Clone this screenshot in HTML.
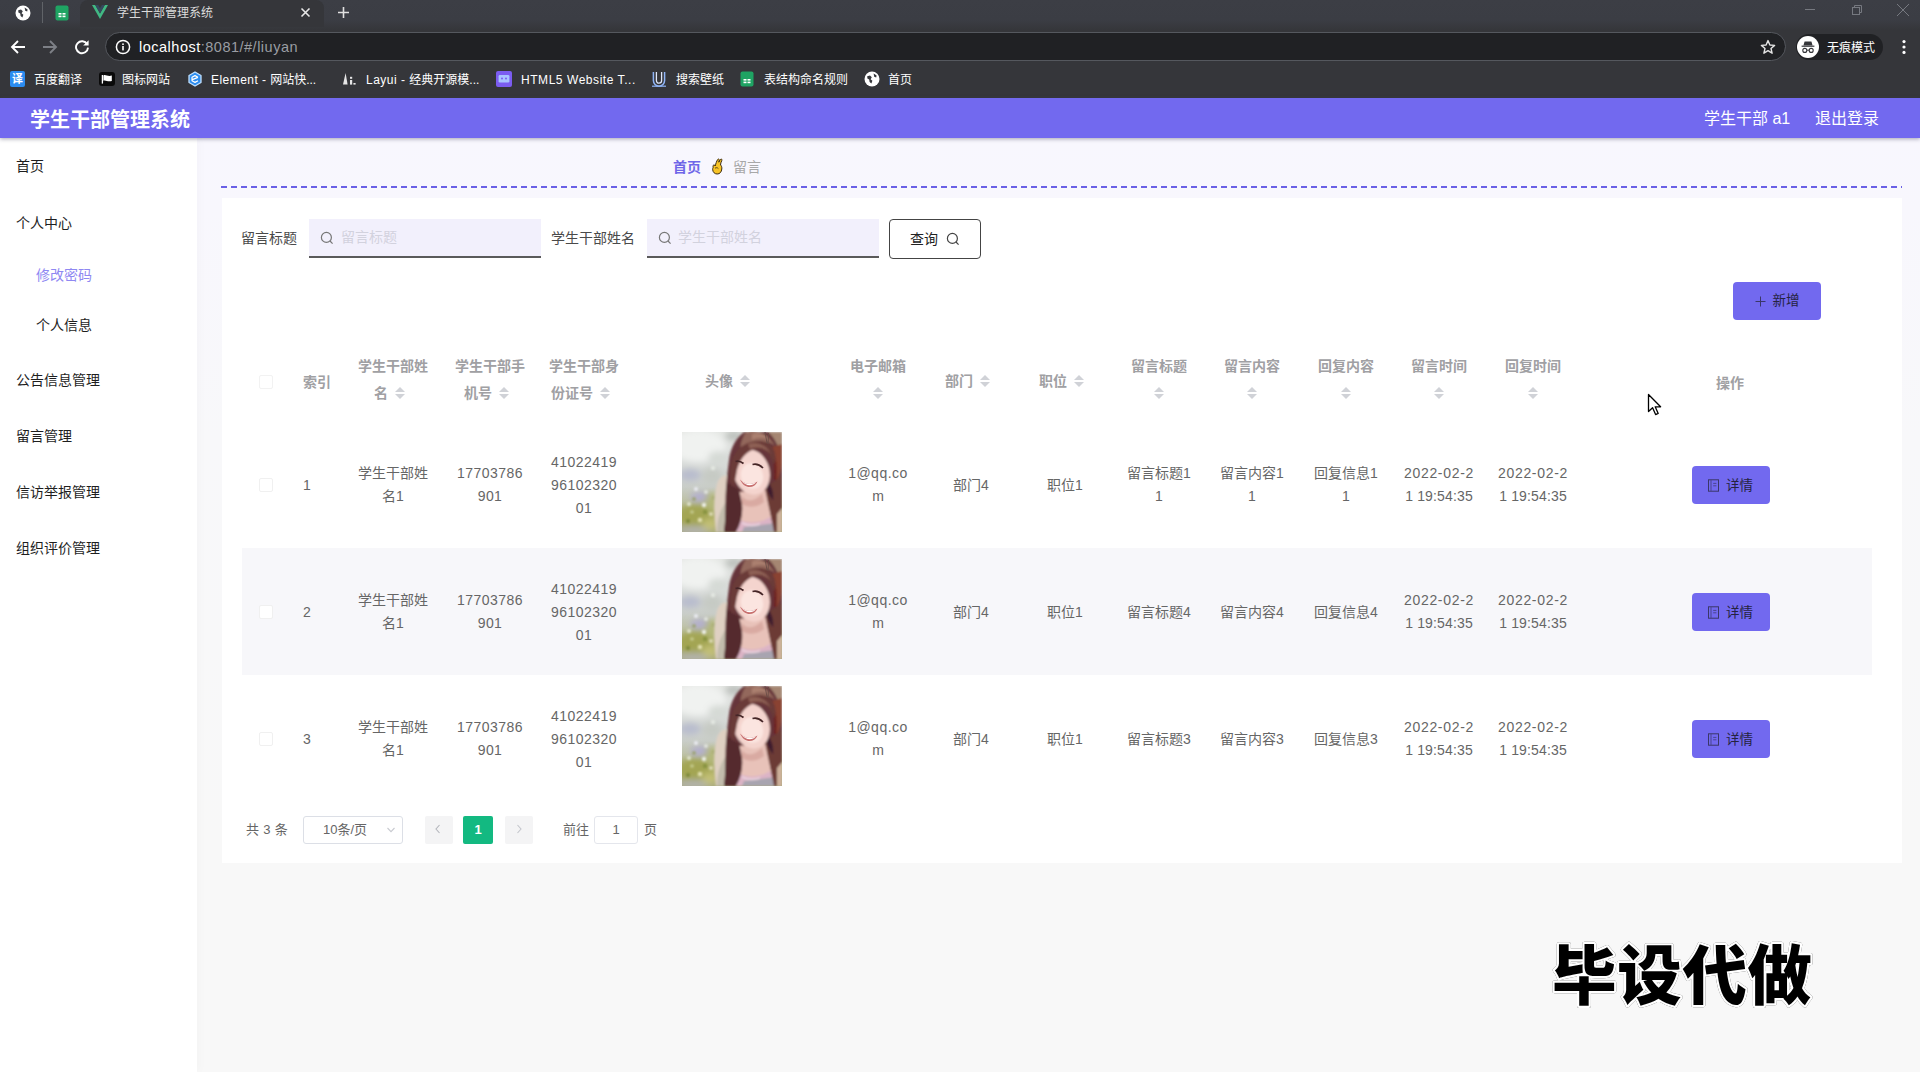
<!DOCTYPE html>
<html lang="zh-CN"><head><meta charset="utf-8"><title>学生干部管理系统</title>
<style>
*{box-sizing:border-box;margin:0;padding:0}
html,body{width:1920px;height:1072px;overflow:hidden;background:#f8f8f8;font-family:"Liberation Sans", "Noto Sans CJK SC", sans-serif;}
body{position:relative}
.abs{position:absolute}
.t{position:absolute;white-space:nowrap;line-height:1}
/* chrome */
#tabstrip{left:0;top:0;width:1920px;height:30px;background:linear-gradient(180deg,#3c3e45 0,#3b3d44 20px,#35363a 30px)}
#toolbar{left:0;top:30px;width:1920px;height:68px;background:#35363a}
#activetab{left:80px;top:0;width:244px;height:27px;background:#35363a;border-radius:8px 8px 0 0}
#omni{left:105px;top:32px;width:1681px;height:29px;border-radius:15px;background:#202124;border:1px solid #55585e}
#incog{left:1796px;top:34px;width:87px;height:26px;border-radius:13px;background:#202124}
.bm{font-size:12px;color:#fff;top:73px}
/* app */
#hdr{left:0;top:98px;width:1920px;height:40px;background:#7269ef;box-shadow:0 1px 4px rgba(60,60,90,.45)}
#side{left:0;top:138px;width:197px;height:934px;background:#fff;box-shadow:2px 0 10px rgba(0,0,0,.025)}
#mainbg{left:197px;top:138px;width:1723px;height:934px;background:linear-gradient(180deg,#f8f7fe 0,#f8f7fd 70px,#f8f8fa 300px,#f8f8f8 700px)}
#card{left:222px;top:198px;width:1680px;height:665px;background:#fff}
.menu{font-size:14px;color:#222}
.th{position:absolute;text-align:center;font-size:14px;font-weight:bold;color:#a0a0a3;line-height:27px;white-space:nowrap}
.td{position:absolute;text-align:center;font-size:14px;color:#666;line-height:23px;white-space:nowrap}
.btn{position:absolute;background:#7269ef;border-radius:4px;color:#3a3a5a;font-size:12px}
.caret{display:inline-block;width:24px;height:12px;vertical-align:middle;position:relative;top:-1px}
.caret:before{content:"";position:absolute;left:7px;top:0;border:5px solid transparent;border-bottom-color:#d0d2d7;border-top-width:0}
.caret:after{content:"";position:absolute;left:7px;top:7px;border:5px solid transparent;border-top-color:#d0d2d7;border-bottom-width:0}
.num{letter-spacing:.45px}
</style></head>
<body>
<div class="abs" id="tabstrip"></div>
<div class="abs" id="toolbar"></div>
<div class="abs" id="activetab"></div>
<svg class="abs" style="left:15px;top:4.5px" width="16" height="16" viewBox="0 0 16 16"><circle cx="8" cy="8" r="7.5" fill="#fff"/><path d="M3.2 5.2 L6 4.6 L7.8 6.2 L6.6 8.2 L8.4 9.8 L7.4 12.6 L5.6 11 L5.2 8.6 L3.4 7.4 Z M9.6 2.6 L12.6 4.4 L12.2 6.6 L10.2 5.8 Z" fill="#3b3d43"/></svg>
<div class="abs" style="left:42px;top:2px;width:1px;height:21px;background:#606368"></div>
<svg class="abs" style="left:55px;top:5px" width="14" height="16" viewBox="0 0 14 16"><rect x="0.5" y="0.5" width="13" height="15" rx="2" fill="#1fa463"/><rect x="3.5" y="8" width="3" height="1.6" fill="#fff"/><rect x="7.5" y="8" width="3" height="1.6" fill="#fff"/><rect x="3.5" y="10.6" width="3" height="1.6" fill="#fff"/><rect x="7.5" y="10.6" width="3" height="1.6" fill="#fff"/></svg>
<svg class="abs" style="left:92px;top:5px" width="16" height="14" viewBox="0 0 16 14"><path d="M0 0 L8 14 L16 0 L12.8 0 L8 8.4 L3.2 0 Z" fill="#41b883"/><path d="M3.2 0 L8 8.4 L12.8 0 L9.9 0 L8 3.3 L6.1 0 Z" fill="#35495e"/></svg>
<div class="t" style="left:117px;top:6.5px;font-size:12px;color:#dcdcdc;">学生干部管理系统</div>
<svg class="abs" style="left:300px;top:7px" width="11" height="11" viewBox="0 0 11 11"><path d="M1.5 1.5 L9.5 9.5 M9.5 1.5 L1.5 9.5" stroke="#e8e8e8" stroke-width="1.6" fill="none"/></svg>
<svg class="abs" style="left:337px;top:6px" width="13" height="13" viewBox="0 0 13 13"><path d="M6.5 1 V12 M1 6.5 H12" stroke="#e0e0e0" stroke-width="1.6" fill="none"/></svg>
<svg class="abs" style="left:1804px;top:3px" width="110" height="14" viewBox="0 0 110 14"><path d="M1 6.5 H11" stroke="#767980" stroke-width="1"/><rect x="48.5" y="4.5" width="7" height="7" fill="none" stroke="#767980"/><path d="M50.5 4.5 V2.5 H57.5 V9.5 H55.5" fill="none" stroke="#767980"/><path d="M93 1 L105 13 M105 1 L93 13" stroke="#767980" stroke-width="1"/></svg>
<svg class="abs" style="left:10px;top:39px" width="16" height="16" viewBox="0 0 16 16"><path d="M15 8 H2.5 M8 2 L2 8 L8 14" stroke="#fff" stroke-width="1.9" fill="none"/></svg>
<svg class="abs" style="left:42px;top:39px" width="16" height="16" viewBox="0 0 16 16"><path d="M1 8 H13.5 M8 2 L14 8 L8 14" stroke="#7d8086" stroke-width="1.9" fill="none"/></svg>
<svg class="abs" style="left:74px;top:39px" width="16" height="16" viewBox="0 0 16 16"><path d="M13.2 5.2 A6 6 0 1 0 14 8.6" stroke="#fff" stroke-width="1.9" fill="none"/><path d="M14.6 1.2 V6.6 H9.2 Z" fill="#fff"/></svg>
<div class="abs" id="omni"></div>
<svg class="abs" style="left:114.5px;top:39px" width="16" height="16" viewBox="0 0 16 16"><circle cx="8" cy="8" r="6.6" fill="none" stroke="#fff" stroke-width="1.5"/><rect x="7.2" y="7" width="1.6" height="4.4" fill="#fff"/><rect x="7.2" y="4.4" width="1.6" height="1.6" fill="#fff"/></svg>
<div class="t" style="left:139px;top:39px;font-size:14.5px;letter-spacing:.5px;color:#fff;line-height:16px">localhost<span style="color:#9a9da3">:8081/#/liuyan</span></div>
<svg class="abs" style="left:1760px;top:39px" width="16" height="16" viewBox="0 0 16 16"><path d="M8 1.6 L9.9 6 L14.6 6.4 L11 9.5 L12.1 14.2 L8 11.7 L3.9 14.2 L5 9.5 L1.4 6.4 L6.1 6 Z" fill="none" stroke="#e4e4e4" stroke-width="1.4" stroke-linejoin="round"/></svg>
<div class="abs" id="incog"></div>
<svg class="abs" style="left:1797px;top:36px" width="22" height="22" viewBox="0 0 22 22"><circle cx="11" cy="11" r="11" fill="#fff"/><path d="M7.6 5.4 h6.8 l1.2 4 h-9.2 Z" fill="#35363a"/><rect x="4.6" y="9.6" width="12.8" height="1.2" fill="#35363a"/><circle cx="7.8" cy="14.4" r="2" fill="none" stroke="#35363a" stroke-width="1.1"/><circle cx="14.2" cy="14.4" r="2" fill="none" stroke="#35363a" stroke-width="1.1"/><path d="M9.8 14.2 h2.4" stroke="#35363a" stroke-width="1"/></svg>
<div class="t" style="left:1827px;top:41.5px;font-size:12px;color:#fff;">无痕模式</div>
<svg class="abs" style="left:1901px;top:39px" width="6" height="16" viewBox="0 0 6 16"><circle cx="3" cy="2.6" r="1.6" fill="#fff"/><circle cx="3" cy="8" r="1.6" fill="#fff"/><circle cx="3" cy="13.4" r="1.6" fill="#fff"/></svg>
<div class="abs" style="left:10px;top:71px;width:15px;height:16px;background:#2b8cf0;border-radius:2px"></div>
<div class="t" style="left:12px;top:74.0px;font-size:11px;color:#fff;font-weight:bold">译</div>
<div class="t" style="left:34px;top:73.5px;font-size:12px;color:#fff;">百度翻译</div>
<svg class="abs" style="left:99px;top:71px" width="16" height="16" viewBox="0 0 16 16"><rect x="0" y="1" width="16" height="14" rx="3" fill="#0a0a0a"/><path d="M3.4 4 V12.6" stroke="#fff" stroke-width="1.3"/><path d="M4.4 4.4 C6.6 3.2 8.6 5.8 12.8 4.6 V10 C8.6 11.2 6.6 8.6 4.4 9.8 Z" fill="#fff"/></svg>
<div class="t" style="left:122px;top:73.5px;font-size:12px;color:#fff;">图标网站</div>
<svg class="abs" style="left:187px;top:71px" width="16" height="16" viewBox="0 0 16 16"><path d="M8 1 L14 4.5 V11.5 L8 15 L2 11.5 V4.5 Z" fill="#2c8df0" stroke="#bfe0ff" stroke-width="1.3" stroke-linejoin="round"/><path d="M11 6.2 L8 4.6 L5 6.2 V9.8 L8 11.4 L11 9.8 M5.4 8.6 L11 6.4" stroke="#fff" stroke-width="1.2" fill="none" stroke-linejoin="round"/></svg>
<div class="t" style="left:211px;top:73.5px;font-size:12px;color:#fff;"><span style="letter-spacing:.45px">Element - </span>网站快...</div>
<svg class="abs" style="left:342px;top:72px" width="15" height="14" viewBox="0 0 15 14"><path d="M3.6 1 L5.6 12.6 H1 Z" fill="#e6e6e6"/><rect x="8" y="8" width="2.2" height="4.6" fill="#e6e6e6"/><rect x="8" y="4.8" width="2.2" height="2" fill="#e6e6e6"/><rect x="11.4" y="11" width="2.2" height="1.6" fill="#e6e6e6"/></svg>
<div class="t" style="left:366px;top:73.5px;font-size:12px;color:#fff;"><span style="letter-spacing:.5px">Layui - </span>经典开源模...</div>
<svg class="abs" style="left:496px;top:71px" width="16" height="16" viewBox="0 0 16 16"><rect width="16" height="16" rx="2" fill="#7b5cf0"/><rect x="2.6" y="4" width="10.8" height="7.4" rx="1.2" fill="#a9c4ff"/><circle cx="6" cy="7.4" r="1" fill="#7b5cf0"/><circle cx="10" cy="7.4" r="1" fill="#7b5cf0"/></svg>
<div class="t" style="left:521px;top:73.5px;font-size:12px;color:#fff;"><span style="letter-spacing:.55px">HTML5 Website T...</span></div>
<svg class="abs" style="left:651px;top:71px" width="16" height="16" viewBox="0 0 16 16"><path d="M2.4 1 V9.6 A5.6 5.6 0 0 0 13.6 9.6 V1" fill="none" stroke="#8fb4f6" stroke-width="1.5"/><path d="M5.4 1 V9.6 A2.6 2.6 0 0 0 10.6 9.6 V1" fill="none" stroke="#dfe8fb" stroke-width="1.3"/><path d="M1 15.2 H15" stroke="#8fb4f6" stroke-width="1.2"/></svg>
<div class="t" style="left:676px;top:73.5px;font-size:12px;color:#fff;">搜索壁纸</div>
<svg class="abs" style="left:740px;top:71px" width="14" height="16" viewBox="0 0 14 16"><rect x="0.5" y="0.5" width="13" height="15" rx="2" fill="#1fa463"/><rect x="3.5" y="8" width="3" height="1.6" fill="#fff"/><rect x="7.5" y="8" width="3" height="1.6" fill="#fff"/><rect x="3.5" y="10.6" width="3" height="1.6" fill="#fff"/><rect x="7.5" y="10.6" width="3" height="1.6" fill="#fff"/></svg>
<div class="t" style="left:764px;top:73.5px;font-size:12px;color:#fff;">表结构命名规则</div>
<svg class="abs" style="left:864px;top:71px" width="16" height="16" viewBox="0 0 16 16"><circle cx="8" cy="8" r="7.5" fill="#fff"/><path d="M3.2 5.2 L6 4.6 L7.8 6.2 L6.6 8.2 L8.4 9.8 L7.4 12.6 L5.6 11 L5.2 8.6 L3.4 7.4 Z M9.6 2.6 L12.6 4.4 L12.2 6.6 L10.2 5.8 Z" fill="#35363a"/></svg>
<div class="t" style="left:888px;top:73.5px;font-size:12px;color:#fff;">首页</div>
<div class="abs" id="mainbg"></div>
<div class="abs" id="side"></div>
<div class="abs" id="hdr"></div>
<div class="t" style="left:30px;top:109.5px;font-size:20px;color:#fff;font-weight:bold">学生干部管理系统</div>
<div class="t" style="left:1704px;top:111.0px;font-size:16px;color:#fff;">学生干部 a1</div>
<div class="t" style="left:1815px;top:111.0px;font-size:16px;color:#fff;">退出登录</div>
<div class="t" style="left:16px;top:158.7px;font-size:14px;color:#1e1e1e;">首页</div>
<div class="t" style="left:16px;top:215.7px;font-size:14px;color:#1e1e1e;">个人中心</div>
<div class="t" style="left:36px;top:268.0px;font-size:14px;color:#8f88f2;">修改密码</div>
<div class="t" style="left:36px;top:318.0px;font-size:14px;color:#1e1e1e;">个人信息</div>
<div class="t" style="left:16px;top:373.0px;font-size:14px;color:#1e1e1e;">公告信息管理</div>
<div class="t" style="left:16px;top:428.5px;font-size:14px;color:#1e1e1e;">留言管理</div>
<div class="t" style="left:16px;top:484.7px;font-size:14px;color:#1e1e1e;">信访举报管理</div>
<div class="t" style="left:16px;top:541.0px;font-size:14px;color:#1e1e1e;">组织评价管理</div>
<div class="t" style="left:673px;top:159.5px;font-size:14px;color:#6f66e8;font-weight:bold">首页</div>
<svg class="abs" style="left:710px;top:158px" width="14" height="17" viewBox="0 0 14 17"><path d="M3.2 9.2 C2.6 7.6 3.4 6.6 4.6 7 L5.2 8 C5.8 5.6 6.6 3.2 7.6 1.6 C8.3 0.6 9.6 1.1 9.3 2.3 L8.8 4.2 C9.3 3 10 1.9 10.7 1.3 C11.5 0.7 12.3 1.5 11.8 2.5 C11 4.2 10.6 5.6 10.5 7 C11.6 7.8 12 9.4 11.8 11 C11.5 14 9.8 16 7.2 16 C4.6 16 3 14.2 2.7 11.8 C2.6 10.8 2.8 9.8 3.2 9.2 Z" fill="#f7c325" stroke="#3a2a10" stroke-width="1" stroke-linejoin="round"/><path d="M5 10.2 C6.2 9.4 7.6 9.6 8.4 10.6" stroke="#3a2a10" stroke-width=".8" fill="none"/></svg>
<div class="t" style="left:733px;top:159.5px;font-size:14px;color:#a8a8a8;">留言</div>
<div class="abs" style="left:221px;top:186px;width:1681px;height:2px;background:repeating-linear-gradient(90deg,#6a60e6 0,#6a60e6 6px,transparent 6px,transparent 10px)"></div>
<div class="abs" id="card"></div>
<div class="t" style="left:241px;top:230.5px;font-size:14px;color:#4a4a4a;">留言标题</div>
<div class="abs" style="left:309px;top:219px;width:232px;height:39px;background:#f2f0fc;border-bottom:2px solid #5a5a5a"></div>
<svg class="abs" style="left:320px;top:231px" width="14" height="14" viewBox="0 0 14 14"><circle cx="6.4" cy="6.4" r="5" fill="none" stroke="#777" stroke-width="1.2"/><path d="M10 10 L12.6 12.6" stroke="#777" stroke-width="1.2"/></svg>
<div class="t" style="left:341px;top:230.0px;font-size:14px;color:#d2d2de;">留言标题</div>
<div class="t" style="left:551px;top:230.5px;font-size:14px;color:#4a4a4a;">学生干部姓名</div>
<div class="abs" style="left:647px;top:219px;width:232px;height:39px;background:#f2f0fc;border-bottom:2px solid #5a5a5a"></div>
<svg class="abs" style="left:658px;top:231px" width="14" height="14" viewBox="0 0 14 14"><circle cx="6.4" cy="6.4" r="5" fill="none" stroke="#777" stroke-width="1.2"/><path d="M10 10 L12.6 12.6" stroke="#777" stroke-width="1.2"/></svg>
<div class="t" style="left:678px;top:230.0px;font-size:14px;color:#d2d2de;">学生干部姓名</div>
<div class="abs" style="left:889px;top:218.5px;width:92px;height:40px;border:1px solid #444;border-radius:4px;background:#fff"></div>
<div class="t" style="left:910px;top:232.0px;font-size:14px;color:#222;">查询</div>
<svg class="abs" style="left:946px;top:232px" width="14" height="14" viewBox="0 0 14 14"><circle cx="6.4" cy="6.4" r="5" fill="none" stroke="#444" stroke-width="1.2"/><path d="M10 10 L12.6 12.6" stroke="#444" stroke-width="1.2"/></svg>
<div class="btn" style="left:1733px;top:282px;width:88px;height:38px"></div>
<svg class="abs" style="left:1755px;top:295.5px" width="11" height="11" viewBox="0 0 11 11"><path d="M5.5 0.5 V10.5 M0.5 5.5 H10.5" stroke="#3a3768" stroke-width="1" fill="none"/></svg>
<div class="t" style="left:1772.5px;top:294.25px;font-size:13.5px;color:#25233f;">新增</div>
<div class="t" style="left:303px;top:375.0px;font-size:14px;color:#a0a0a3;font-weight:bold">索引</div>
<div class="th" style="left:333px;top:352.5px;width:120px">学生干部姓</div>
<div class="th" style="left:333px;top:379.5px;width:120px">名<i class="caret"></i></div>
<div class="th" style="left:430px;top:352.5px;width:120px">学生干部手</div>
<div class="th" style="left:430px;top:379.5px;width:120px">机号<i class="caret"></i></div>
<div class="th" style="left:524px;top:352.5px;width:120px">学生干部身</div>
<div class="th" style="left:524px;top:379.5px;width:120px">份证号<i class="caret"></i></div>
<div class="th" style="left:671px;top:367.5px;width:120px">头像<i class="caret"></i></div>
<div class="th" style="left:818px;top:352.5px;width:120px">电子邮箱</div>
<div class="th" style="left:818px;top:379.5px;width:120px"><i class="caret"></i></div>
<div class="th" style="left:911px;top:367.5px;width:120px">部门<i class="caret"></i></div>
<div class="th" style="left:1005px;top:367.5px;width:120px">职位<i class="caret"></i></div>
<div class="th" style="left:1099px;top:352.5px;width:120px">留言标题</div>
<div class="th" style="left:1099px;top:379.5px;width:120px"><i class="caret"></i></div>
<div class="th" style="left:1192px;top:352.5px;width:120px">留言内容</div>
<div class="th" style="left:1192px;top:379.5px;width:120px"><i class="caret"></i></div>
<div class="th" style="left:1286px;top:352.5px;width:120px">回复内容</div>
<div class="th" style="left:1286px;top:379.5px;width:120px"><i class="caret"></i></div>
<div class="th" style="left:1379px;top:352.5px;width:120px">留言时间</div>
<div class="th" style="left:1379px;top:379.5px;width:120px"><i class="caret"></i></div>
<div class="th" style="left:1473px;top:352.5px;width:120px">回复时间</div>
<div class="th" style="left:1473px;top:379.5px;width:120px"><i class="caret"></i></div>
<div class="th" style="left:1670px;top:369.5px;width:120px">操作</div>
<div class="abs" style="left:259px;top:375px;width:14px;height:14px;border:1px solid #f2f2f2;border-radius:2px;background:#fff"></div>
<div class="abs" style="left:242px;top:548px;width:1630px;height:127px;background:#f7f7fa"></div>
<div class="abs" style="left:259px;top:478px;width:14px;height:14px;border:1px solid #f0f0f0;border-radius:2px;background:#fff"></div>
<div class="t" style="left:303px;top:478.0px;font-size:14px;color:#666;">1</div>
<div class="td " style="left:333px;top:462.0px;width:120px">学生干部姓<br>名1</div>
<div class="td num" style="left:430px;top:462.0px;width:120px">17703786<br>901</div>
<div class="td num" style="left:524px;top:450.5px;width:120px">41022419<br>96102320<br>01</div>
<div class="abs avatar" style="left:682px;top:432px;width:100px;height:100px;overflow:hidden"><svg width="100" height="100" viewBox="0 0 100 100" preserveAspectRatio="none"><defs><filter id="f1_" x="-20%" y="-20%" width="140%" height="140%"><feGaussianBlur stdDeviation="0.9"/></filter><filter id="f1_2" x="-20%" y="-20%" width="140%" height="140%"><feGaussianBlur stdDeviation="3.2"/></filter><filter id="f1_3" x="-20%" y="-20%" width="140%" height="140%"><feGaussianBlur stdDeviation="0.5"/></filter><linearGradient id="g1" x1="0" y1="0" x2="0" y2="1"><stop offset="0" stop-color="#e4e6e3"/><stop offset="0.3" stop-color="#d9dcda"/><stop offset="0.55" stop-color="#c9cdc8"/><stop offset="0.8" stop-color="#b4b88a"/><stop offset="1" stop-color="#a9aa80"/></linearGradient></defs><rect width="100" height="100" fill="url(#g1)"/><g filter="url(#f1_2)"><ellipse cx="16" cy="14" rx="28" ry="16" fill="#f0f2f0"/><ellipse cx="52" cy="4" rx="9" ry="5" fill="#bcc0bc"/><ellipse cx="36" cy="26" rx="10" ry="7" fill="#d6dad6"/><ellipse cx="8" cy="43" rx="11" ry="6" fill="#b8bccd"/><ellipse cx="30" cy="44" rx="10" ry="8" fill="#c6cac4"/><ellipse cx="18" cy="65" rx="10" ry="4" fill="#b0aad4"/><ellipse cx="14" cy="84" rx="20" ry="12" fill="#a3a552"/><ellipse cx="30" cy="70" rx="7" ry="10" fill="#b4b87c"/><ellipse cx="12" cy="98" rx="16" ry="4" fill="#b4b4b0"/><ellipse cx="28" cy="92" rx="8" ry="6" fill="#c2bf74"/></g><g filter="url(#f1_)"><circle cx="14" cy="57" r="2" fill="#eceef4"/><circle cx="24" cy="60" r="1.8" fill="#e8ebe6"/><circle cx="22" cy="73" r="2.2" fill="#eef0ea"/><circle cx="7" cy="72" r="2" fill="#e2e5d2"/><circle cx="18" cy="88" r="2.3" fill="#e2e0b0"/><circle cx="29" cy="82" r="2" fill="#dedcb8"/><circle cx="31" cy="36" r="2.2" fill="#e4e8e2"/><circle cx="6" cy="89" r="2" fill="#7c883a"/><circle cx="23" cy="80" r="2.2" fill="#86923f"/><circle cx="12" cy="67" r="1.8" fill="#98a068"/><circle cx="32" cy="66" r="2" fill="#a6ac72"/><circle cx="10" cy="80" r="1.8" fill="#c8cc90"/><path d="M34 100 C32 84 31 66 35 52 C37 45 42 42 46 44 L50 60 L50 100 Z" fill="#dfd0c2"/><path d="M35 100 C35 88 38 78 44 70 L49 100 Z" fill="#c2bcac"/><path d="M62 0 C54 6 48.5 16 47 28 C45.5 40 44 52 43.5 64 C43 78 44 90 42 100 L100 100 L100 0 Z" fill="#66363a"/><path d="M63 1 C72 -3 86 0 93 14 C86 8 74 8 64 17 C58 22 56 14 63 1 Z" fill="#93675b"/><path d="M70 2 C76 0 84 2 88 8 C82 5 76 5 70 8 Z" fill="#ab8070"/><path d="M86 0 C93 6 98 16 100 30 L100 0 Z" fill="#a58672"/><path d="M87 16 C93 22 95 36 94 50 C98 44 100 36 100 28 L100 12 Z" fill="#8a4230"/><path d="M89 18 C93 26 94 38 93 48" stroke="#6e2424" stroke-width="3" fill="none"/><path d="M57 60 L84 58 L92 100 L53 100 Z" fill="#e8c2b9"/><path d="M60 64 C64 70 72 70 80 62 L82 70 C74 76 66 76 60 72 Z" fill="#d9aaa2"/><path d="M56 87 C64 92 78 92 88 85 L94 100 L52 100 Z" fill="#dcb4c6"/><path d="M62 95 L94 91 L95 100 L60 100 Z" fill="#a8a4b0"/><path d="M60 91 C66 94 72 94 78 92" stroke="#eed8e2" stroke-width="1.6" fill="none"/><path d="M83 56 C86 72 90 88 92 100 L100 100 L100 44 Z" fill="#6c3a36"/><path d="M84 47 C88 52 92 58 91 68 C87 64 84 58 84 47 Z" fill="#3c1f2e"/><path d="M95 82 L100 76 L100 100 L95 100 Z" fill="#cdb09a"/><path d="M45 50 C44 66 44 82 42 100 L54 100 C59 92 61 82 60 72 C59 66 58 62 57 58 Z" fill="#552a2f"/><ellipse cx="69.5" cy="40" rx="18" ry="23" transform="rotate(-16 69.5 40)" fill="#f4d4ce"/><ellipse cx="70" cy="44" rx="11" ry="13" transform="rotate(-16 70 44)" fill="#fbe5e0"/><path d="M49 34 C51 20 60 10 76 9 C92 9 96 22 92 34 C90 24 84 17 76 17 C66 17 58 26 55 38 C54 44 53 50 51 56 C48 50 48 42 49 34 Z" fill="#6b3a38"/><path d="M66 12 C74 9 84 12 89 22 C84 16 76 14 68 17 Z" fill="#8e6054"/></g><g filter="url(#f1_3)"><path d="M53.5 29.5 C56 28.5 59 29.5 61.5 31.5" stroke="#452628" stroke-width="1.7" fill="none"/><path d="M70.5 32.5 C74 31.5 78 33 81 36" stroke="#452628" stroke-width="1.7" fill="none"/><path d="M58 47.5 C63 52.5 69 53.5 75.5 49.5 C72 57.5 62 57 58 47.5 Z" fill="#c76f6e"/><path d="M59.5 49 C64 52.4 69 52.8 74 50.2 C71 54.4 63.5 54.2 59.5 49 Z" fill="#fff"/><path d="M83 0 L85 11 M86.5 1 L86 12" stroke="#6a4c46" stroke-width="0.9" fill="none"/></g></svg></div>
<div class="td " style="left:818px;top:462.0px;width:120px"><span style="letter-spacing:.5px">1@qq.co</span><br>m</div>
<div class="td " style="left:911px;top:473.5px;width:120px">部门4</div>
<div class="td " style="left:1005px;top:473.5px;width:120px">职位1</div>
<div class="td " style="left:1099px;top:462.0px;width:120px">留言标题1<br>1</div>
<div class="td " style="left:1192px;top:462.0px;width:120px">留言内容1<br>1</div>
<div class="td " style="left:1286px;top:462.0px;width:120px">回复信息1<br>1</div>
<div class="td " style="left:1379px;top:462.0px;width:120px"><span style="letter-spacing:.7px">2022-02-2</span><br><span style="letter-spacing:.15px">1 19:54:35</span></div>
<div class="td " style="left:1473px;top:462.0px;width:120px"><span style="letter-spacing:.7px">2022-02-2</span><br><span style="letter-spacing:.15px">1 19:54:35</span></div>
<div class="btn" style="left:1692px;top:466px;width:78px;height:38px"></div>
<svg class="abs" style="left:1707px;top:478.5px" width="13" height="13" viewBox="0 0 13 13"><rect x="1.5" y="0.8" width="10" height="11.4" fill="none" stroke="#3a3768" stroke-width="1"/><path d="M4 0.8 V12.2 M6.2 4.4 H9.4 M6.2 6.8 H9.4" stroke="#4a4690" stroke-width="1" fill="none"/></svg>
<div class="t" style="left:1726px;top:478.75px;font-size:13.5px;color:#25233f;">详情</div>
<div class="abs" style="left:259px;top:605px;width:14px;height:14px;border:1px solid #f0f0f0;border-radius:2px;background:#fff"></div>
<div class="t" style="left:303px;top:605.0px;font-size:14px;color:#666;">2</div>
<div class="td " style="left:333px;top:589.0px;width:120px">学生干部姓<br>名1</div>
<div class="td num" style="left:430px;top:589.0px;width:120px">17703786<br>901</div>
<div class="td num" style="left:524px;top:577.5px;width:120px">41022419<br>96102320<br>01</div>
<div class="abs avatar" style="left:682px;top:559px;width:100px;height:100px;overflow:hidden"><svg width="100" height="100" viewBox="0 0 100 100" preserveAspectRatio="none"><defs><filter id="f2_" x="-20%" y="-20%" width="140%" height="140%"><feGaussianBlur stdDeviation="0.9"/></filter><filter id="f2_2" x="-20%" y="-20%" width="140%" height="140%"><feGaussianBlur stdDeviation="3.2"/></filter><filter id="f2_3" x="-20%" y="-20%" width="140%" height="140%"><feGaussianBlur stdDeviation="0.5"/></filter><linearGradient id="g2" x1="0" y1="0" x2="0" y2="1"><stop offset="0" stop-color="#e4e6e3"/><stop offset="0.3" stop-color="#d9dcda"/><stop offset="0.55" stop-color="#c9cdc8"/><stop offset="0.8" stop-color="#b4b88a"/><stop offset="1" stop-color="#a9aa80"/></linearGradient></defs><rect width="100" height="100" fill="url(#g2)"/><g filter="url(#f2_2)"><ellipse cx="16" cy="14" rx="28" ry="16" fill="#f0f2f0"/><ellipse cx="52" cy="4" rx="9" ry="5" fill="#bcc0bc"/><ellipse cx="36" cy="26" rx="10" ry="7" fill="#d6dad6"/><ellipse cx="8" cy="43" rx="11" ry="6" fill="#b8bccd"/><ellipse cx="30" cy="44" rx="10" ry="8" fill="#c6cac4"/><ellipse cx="18" cy="65" rx="10" ry="4" fill="#b0aad4"/><ellipse cx="14" cy="84" rx="20" ry="12" fill="#a3a552"/><ellipse cx="30" cy="70" rx="7" ry="10" fill="#b4b87c"/><ellipse cx="12" cy="98" rx="16" ry="4" fill="#b4b4b0"/><ellipse cx="28" cy="92" rx="8" ry="6" fill="#c2bf74"/></g><g filter="url(#f2_)"><circle cx="14" cy="57" r="2" fill="#eceef4"/><circle cx="24" cy="60" r="1.8" fill="#e8ebe6"/><circle cx="22" cy="73" r="2.2" fill="#eef0ea"/><circle cx="7" cy="72" r="2" fill="#e2e5d2"/><circle cx="18" cy="88" r="2.3" fill="#e2e0b0"/><circle cx="29" cy="82" r="2" fill="#dedcb8"/><circle cx="31" cy="36" r="2.2" fill="#e4e8e2"/><circle cx="6" cy="89" r="2" fill="#7c883a"/><circle cx="23" cy="80" r="2.2" fill="#86923f"/><circle cx="12" cy="67" r="1.8" fill="#98a068"/><circle cx="32" cy="66" r="2" fill="#a6ac72"/><circle cx="10" cy="80" r="1.8" fill="#c8cc90"/><path d="M34 100 C32 84 31 66 35 52 C37 45 42 42 46 44 L50 60 L50 100 Z" fill="#dfd0c2"/><path d="M35 100 C35 88 38 78 44 70 L49 100 Z" fill="#c2bcac"/><path d="M62 0 C54 6 48.5 16 47 28 C45.5 40 44 52 43.5 64 C43 78 44 90 42 100 L100 100 L100 0 Z" fill="#66363a"/><path d="M63 1 C72 -3 86 0 93 14 C86 8 74 8 64 17 C58 22 56 14 63 1 Z" fill="#93675b"/><path d="M70 2 C76 0 84 2 88 8 C82 5 76 5 70 8 Z" fill="#ab8070"/><path d="M86 0 C93 6 98 16 100 30 L100 0 Z" fill="#a58672"/><path d="M87 16 C93 22 95 36 94 50 C98 44 100 36 100 28 L100 12 Z" fill="#8a4230"/><path d="M89 18 C93 26 94 38 93 48" stroke="#6e2424" stroke-width="3" fill="none"/><path d="M57 60 L84 58 L92 100 L53 100 Z" fill="#e8c2b9"/><path d="M60 64 C64 70 72 70 80 62 L82 70 C74 76 66 76 60 72 Z" fill="#d9aaa2"/><path d="M56 87 C64 92 78 92 88 85 L94 100 L52 100 Z" fill="#dcb4c6"/><path d="M62 95 L94 91 L95 100 L60 100 Z" fill="#a8a4b0"/><path d="M60 91 C66 94 72 94 78 92" stroke="#eed8e2" stroke-width="1.6" fill="none"/><path d="M83 56 C86 72 90 88 92 100 L100 100 L100 44 Z" fill="#6c3a36"/><path d="M84 47 C88 52 92 58 91 68 C87 64 84 58 84 47 Z" fill="#3c1f2e"/><path d="M95 82 L100 76 L100 100 L95 100 Z" fill="#cdb09a"/><path d="M45 50 C44 66 44 82 42 100 L54 100 C59 92 61 82 60 72 C59 66 58 62 57 58 Z" fill="#552a2f"/><ellipse cx="69.5" cy="40" rx="18" ry="23" transform="rotate(-16 69.5 40)" fill="#f4d4ce"/><ellipse cx="70" cy="44" rx="11" ry="13" transform="rotate(-16 70 44)" fill="#fbe5e0"/><path d="M49 34 C51 20 60 10 76 9 C92 9 96 22 92 34 C90 24 84 17 76 17 C66 17 58 26 55 38 C54 44 53 50 51 56 C48 50 48 42 49 34 Z" fill="#6b3a38"/><path d="M66 12 C74 9 84 12 89 22 C84 16 76 14 68 17 Z" fill="#8e6054"/></g><g filter="url(#f2_3)"><path d="M53.5 29.5 C56 28.5 59 29.5 61.5 31.5" stroke="#452628" stroke-width="1.7" fill="none"/><path d="M70.5 32.5 C74 31.5 78 33 81 36" stroke="#452628" stroke-width="1.7" fill="none"/><path d="M58 47.5 C63 52.5 69 53.5 75.5 49.5 C72 57.5 62 57 58 47.5 Z" fill="#c76f6e"/><path d="M59.5 49 C64 52.4 69 52.8 74 50.2 C71 54.4 63.5 54.2 59.5 49 Z" fill="#fff"/><path d="M83 0 L85 11 M86.5 1 L86 12" stroke="#6a4c46" stroke-width="0.9" fill="none"/></g></svg></div>
<div class="td " style="left:818px;top:589.0px;width:120px"><span style="letter-spacing:.5px">1@qq.co</span><br>m</div>
<div class="td " style="left:911px;top:600.5px;width:120px">部门4</div>
<div class="td " style="left:1005px;top:600.5px;width:120px">职位1</div>
<div class="td " style="left:1099px;top:600.5px;width:120px">留言标题4</div>
<div class="td " style="left:1192px;top:600.5px;width:120px">留言内容4</div>
<div class="td " style="left:1286px;top:600.5px;width:120px">回复信息4</div>
<div class="td " style="left:1379px;top:589.0px;width:120px"><span style="letter-spacing:.7px">2022-02-2</span><br><span style="letter-spacing:.15px">1 19:54:35</span></div>
<div class="td " style="left:1473px;top:589.0px;width:120px"><span style="letter-spacing:.7px">2022-02-2</span><br><span style="letter-spacing:.15px">1 19:54:35</span></div>
<div class="btn" style="left:1692px;top:593px;width:78px;height:38px"></div>
<svg class="abs" style="left:1707px;top:605.5px" width="13" height="13" viewBox="0 0 13 13"><rect x="1.5" y="0.8" width="10" height="11.4" fill="none" stroke="#3a3768" stroke-width="1"/><path d="M4 0.8 V12.2 M6.2 4.4 H9.4 M6.2 6.8 H9.4" stroke="#4a4690" stroke-width="1" fill="none"/></svg>
<div class="t" style="left:1726px;top:605.75px;font-size:13.5px;color:#25233f;">详情</div>
<div class="abs" style="left:259px;top:732px;width:14px;height:14px;border:1px solid #f0f0f0;border-radius:2px;background:#fff"></div>
<div class="t" style="left:303px;top:732.0px;font-size:14px;color:#666;">3</div>
<div class="td " style="left:333px;top:716.0px;width:120px">学生干部姓<br>名1</div>
<div class="td num" style="left:430px;top:716.0px;width:120px">17703786<br>901</div>
<div class="td num" style="left:524px;top:704.5px;width:120px">41022419<br>96102320<br>01</div>
<div class="abs avatar" style="left:682px;top:686px;width:100px;height:100px;overflow:hidden"><svg width="100" height="100" viewBox="0 0 100 100" preserveAspectRatio="none"><defs><filter id="f3_" x="-20%" y="-20%" width="140%" height="140%"><feGaussianBlur stdDeviation="0.9"/></filter><filter id="f3_2" x="-20%" y="-20%" width="140%" height="140%"><feGaussianBlur stdDeviation="3.2"/></filter><filter id="f3_3" x="-20%" y="-20%" width="140%" height="140%"><feGaussianBlur stdDeviation="0.5"/></filter><linearGradient id="g3" x1="0" y1="0" x2="0" y2="1"><stop offset="0" stop-color="#e4e6e3"/><stop offset="0.3" stop-color="#d9dcda"/><stop offset="0.55" stop-color="#c9cdc8"/><stop offset="0.8" stop-color="#b4b88a"/><stop offset="1" stop-color="#a9aa80"/></linearGradient></defs><rect width="100" height="100" fill="url(#g3)"/><g filter="url(#f3_2)"><ellipse cx="16" cy="14" rx="28" ry="16" fill="#f0f2f0"/><ellipse cx="52" cy="4" rx="9" ry="5" fill="#bcc0bc"/><ellipse cx="36" cy="26" rx="10" ry="7" fill="#d6dad6"/><ellipse cx="8" cy="43" rx="11" ry="6" fill="#b8bccd"/><ellipse cx="30" cy="44" rx="10" ry="8" fill="#c6cac4"/><ellipse cx="18" cy="65" rx="10" ry="4" fill="#b0aad4"/><ellipse cx="14" cy="84" rx="20" ry="12" fill="#a3a552"/><ellipse cx="30" cy="70" rx="7" ry="10" fill="#b4b87c"/><ellipse cx="12" cy="98" rx="16" ry="4" fill="#b4b4b0"/><ellipse cx="28" cy="92" rx="8" ry="6" fill="#c2bf74"/></g><g filter="url(#f3_)"><circle cx="14" cy="57" r="2" fill="#eceef4"/><circle cx="24" cy="60" r="1.8" fill="#e8ebe6"/><circle cx="22" cy="73" r="2.2" fill="#eef0ea"/><circle cx="7" cy="72" r="2" fill="#e2e5d2"/><circle cx="18" cy="88" r="2.3" fill="#e2e0b0"/><circle cx="29" cy="82" r="2" fill="#dedcb8"/><circle cx="31" cy="36" r="2.2" fill="#e4e8e2"/><circle cx="6" cy="89" r="2" fill="#7c883a"/><circle cx="23" cy="80" r="2.2" fill="#86923f"/><circle cx="12" cy="67" r="1.8" fill="#98a068"/><circle cx="32" cy="66" r="2" fill="#a6ac72"/><circle cx="10" cy="80" r="1.8" fill="#c8cc90"/><path d="M34 100 C32 84 31 66 35 52 C37 45 42 42 46 44 L50 60 L50 100 Z" fill="#dfd0c2"/><path d="M35 100 C35 88 38 78 44 70 L49 100 Z" fill="#c2bcac"/><path d="M62 0 C54 6 48.5 16 47 28 C45.5 40 44 52 43.5 64 C43 78 44 90 42 100 L100 100 L100 0 Z" fill="#66363a"/><path d="M63 1 C72 -3 86 0 93 14 C86 8 74 8 64 17 C58 22 56 14 63 1 Z" fill="#93675b"/><path d="M70 2 C76 0 84 2 88 8 C82 5 76 5 70 8 Z" fill="#ab8070"/><path d="M86 0 C93 6 98 16 100 30 L100 0 Z" fill="#a58672"/><path d="M87 16 C93 22 95 36 94 50 C98 44 100 36 100 28 L100 12 Z" fill="#8a4230"/><path d="M89 18 C93 26 94 38 93 48" stroke="#6e2424" stroke-width="3" fill="none"/><path d="M57 60 L84 58 L92 100 L53 100 Z" fill="#e8c2b9"/><path d="M60 64 C64 70 72 70 80 62 L82 70 C74 76 66 76 60 72 Z" fill="#d9aaa2"/><path d="M56 87 C64 92 78 92 88 85 L94 100 L52 100 Z" fill="#dcb4c6"/><path d="M62 95 L94 91 L95 100 L60 100 Z" fill="#a8a4b0"/><path d="M60 91 C66 94 72 94 78 92" stroke="#eed8e2" stroke-width="1.6" fill="none"/><path d="M83 56 C86 72 90 88 92 100 L100 100 L100 44 Z" fill="#6c3a36"/><path d="M84 47 C88 52 92 58 91 68 C87 64 84 58 84 47 Z" fill="#3c1f2e"/><path d="M95 82 L100 76 L100 100 L95 100 Z" fill="#cdb09a"/><path d="M45 50 C44 66 44 82 42 100 L54 100 C59 92 61 82 60 72 C59 66 58 62 57 58 Z" fill="#552a2f"/><ellipse cx="69.5" cy="40" rx="18" ry="23" transform="rotate(-16 69.5 40)" fill="#f4d4ce"/><ellipse cx="70" cy="44" rx="11" ry="13" transform="rotate(-16 70 44)" fill="#fbe5e0"/><path d="M49 34 C51 20 60 10 76 9 C92 9 96 22 92 34 C90 24 84 17 76 17 C66 17 58 26 55 38 C54 44 53 50 51 56 C48 50 48 42 49 34 Z" fill="#6b3a38"/><path d="M66 12 C74 9 84 12 89 22 C84 16 76 14 68 17 Z" fill="#8e6054"/></g><g filter="url(#f3_3)"><path d="M53.5 29.5 C56 28.5 59 29.5 61.5 31.5" stroke="#452628" stroke-width="1.7" fill="none"/><path d="M70.5 32.5 C74 31.5 78 33 81 36" stroke="#452628" stroke-width="1.7" fill="none"/><path d="M58 47.5 C63 52.5 69 53.5 75.5 49.5 C72 57.5 62 57 58 47.5 Z" fill="#c76f6e"/><path d="M59.5 49 C64 52.4 69 52.8 74 50.2 C71 54.4 63.5 54.2 59.5 49 Z" fill="#fff"/><path d="M83 0 L85 11 M86.5 1 L86 12" stroke="#6a4c46" stroke-width="0.9" fill="none"/></g></svg></div>
<div class="td " style="left:818px;top:716.0px;width:120px"><span style="letter-spacing:.5px">1@qq.co</span><br>m</div>
<div class="td " style="left:911px;top:727.5px;width:120px">部门4</div>
<div class="td " style="left:1005px;top:727.5px;width:120px">职位1</div>
<div class="td " style="left:1099px;top:727.5px;width:120px">留言标题3</div>
<div class="td " style="left:1192px;top:727.5px;width:120px">留言内容3</div>
<div class="td " style="left:1286px;top:727.5px;width:120px">回复信息3</div>
<div class="td " style="left:1379px;top:716.0px;width:120px"><span style="letter-spacing:.7px">2022-02-2</span><br><span style="letter-spacing:.15px">1 19:54:35</span></div>
<div class="td " style="left:1473px;top:716.0px;width:120px"><span style="letter-spacing:.7px">2022-02-2</span><br><span style="letter-spacing:.15px">1 19:54:35</span></div>
<div class="btn" style="left:1692px;top:720px;width:78px;height:38px"></div>
<svg class="abs" style="left:1707px;top:732.5px" width="13" height="13" viewBox="0 0 13 13"><rect x="1.5" y="0.8" width="10" height="11.4" fill="none" stroke="#3a3768" stroke-width="1"/><path d="M4 0.8 V12.2 M6.2 4.4 H9.4 M6.2 6.8 H9.4" stroke="#4a4690" stroke-width="1" fill="none"/></svg>
<div class="t" style="left:1726px;top:732.75px;font-size:13.5px;color:#25233f;">详情</div>
<div class="t" style="left:246px;top:823.0px;font-size:13px;color:#666;letter-spacing:.3px">共 3 条</div>
<div class="abs" style="left:303px;top:816px;width:100px;height:28px;border:1px solid #dcdfe6;border-radius:3px;background:#fff"></div>
<div class="t" style="left:323px;top:823.0px;font-size:13px;color:#666;">10条/页</div>
<svg class="abs" style="left:386px;top:826px" width="10" height="8" viewBox="0 0 10 8"><path d="M1.5 2 L5 5.6 L8.5 2" stroke="#c8cad0" stroke-width="1.1" fill="none"/></svg>
<div class="abs" style="left:425px;top:816px;width:28px;height:28px;background:#f4f4f5;border-radius:2px"></div>
<svg class="abs" style="left:433px;top:823px" width="10" height="12" viewBox="0 0 10 12"><path d="M6.5 2 L3 6 L6.5 10" stroke="#b4b6bc" stroke-width="1.1" fill="none"/></svg>
<div class="abs" style="left:463px;top:816px;width:30px;height:28px;background:#13b981;border-radius:2px"></div>
<div class="t" style="left:474.5px;top:823.0px;font-size:13px;color:#fff;font-weight:bold">1</div>
<div class="abs" style="left:505px;top:816px;width:28px;height:28px;background:#f4f4f5;border-radius:2px"></div>
<svg class="abs" style="left:514px;top:823px" width="10" height="12" viewBox="0 0 10 12"><path d="M3.5 2 L7 6 L3.5 10" stroke="#c4c6cc" stroke-width="1.1" fill="none"/></svg>
<div class="t" style="left:563px;top:823.0px;font-size:13px;color:#666;">前往</div>
<div class="abs" style="left:594px;top:816px;width:44px;height:28px;border:1px solid #e4e6ec;border-radius:3px;background:#fff"></div>
<div class="t" style="left:612.5px;top:823.0px;font-size:13px;color:#666;">1</div>
<div class="t" style="left:644px;top:823.0px;font-size:13px;color:#666;">页</div>
<svg class="abs" style="left:1530px;top:920px;overflow:visible" width="310" height="110" viewBox="0 0 310 110"><text x="22" y="78.5" font-family="Liberation Sans, Noto Sans CJK SC, sans-serif" font-size="64.5" font-weight="900" letter-spacing="0.7" fill="#000" stroke="#fff" stroke-width="4.4" stroke-linejoin="round" paint-order="stroke" style="filter:drop-shadow(0 0 0.7px rgba(0,0,0,.75))">毕设代做</text></svg>
<svg class="abs" style="left:1647px;top:393px" width="16" height="24" viewBox="0 0 16 24"><path d="M1.5 1.5 V18.5 L5.6 14.8 L8.6 21.6 L11.2 20.4 L8.2 13.8 H13.6 Z" fill="#fff" stroke="#000" stroke-width="1.3" stroke-linejoin="round"/></svg>
</body></html>
